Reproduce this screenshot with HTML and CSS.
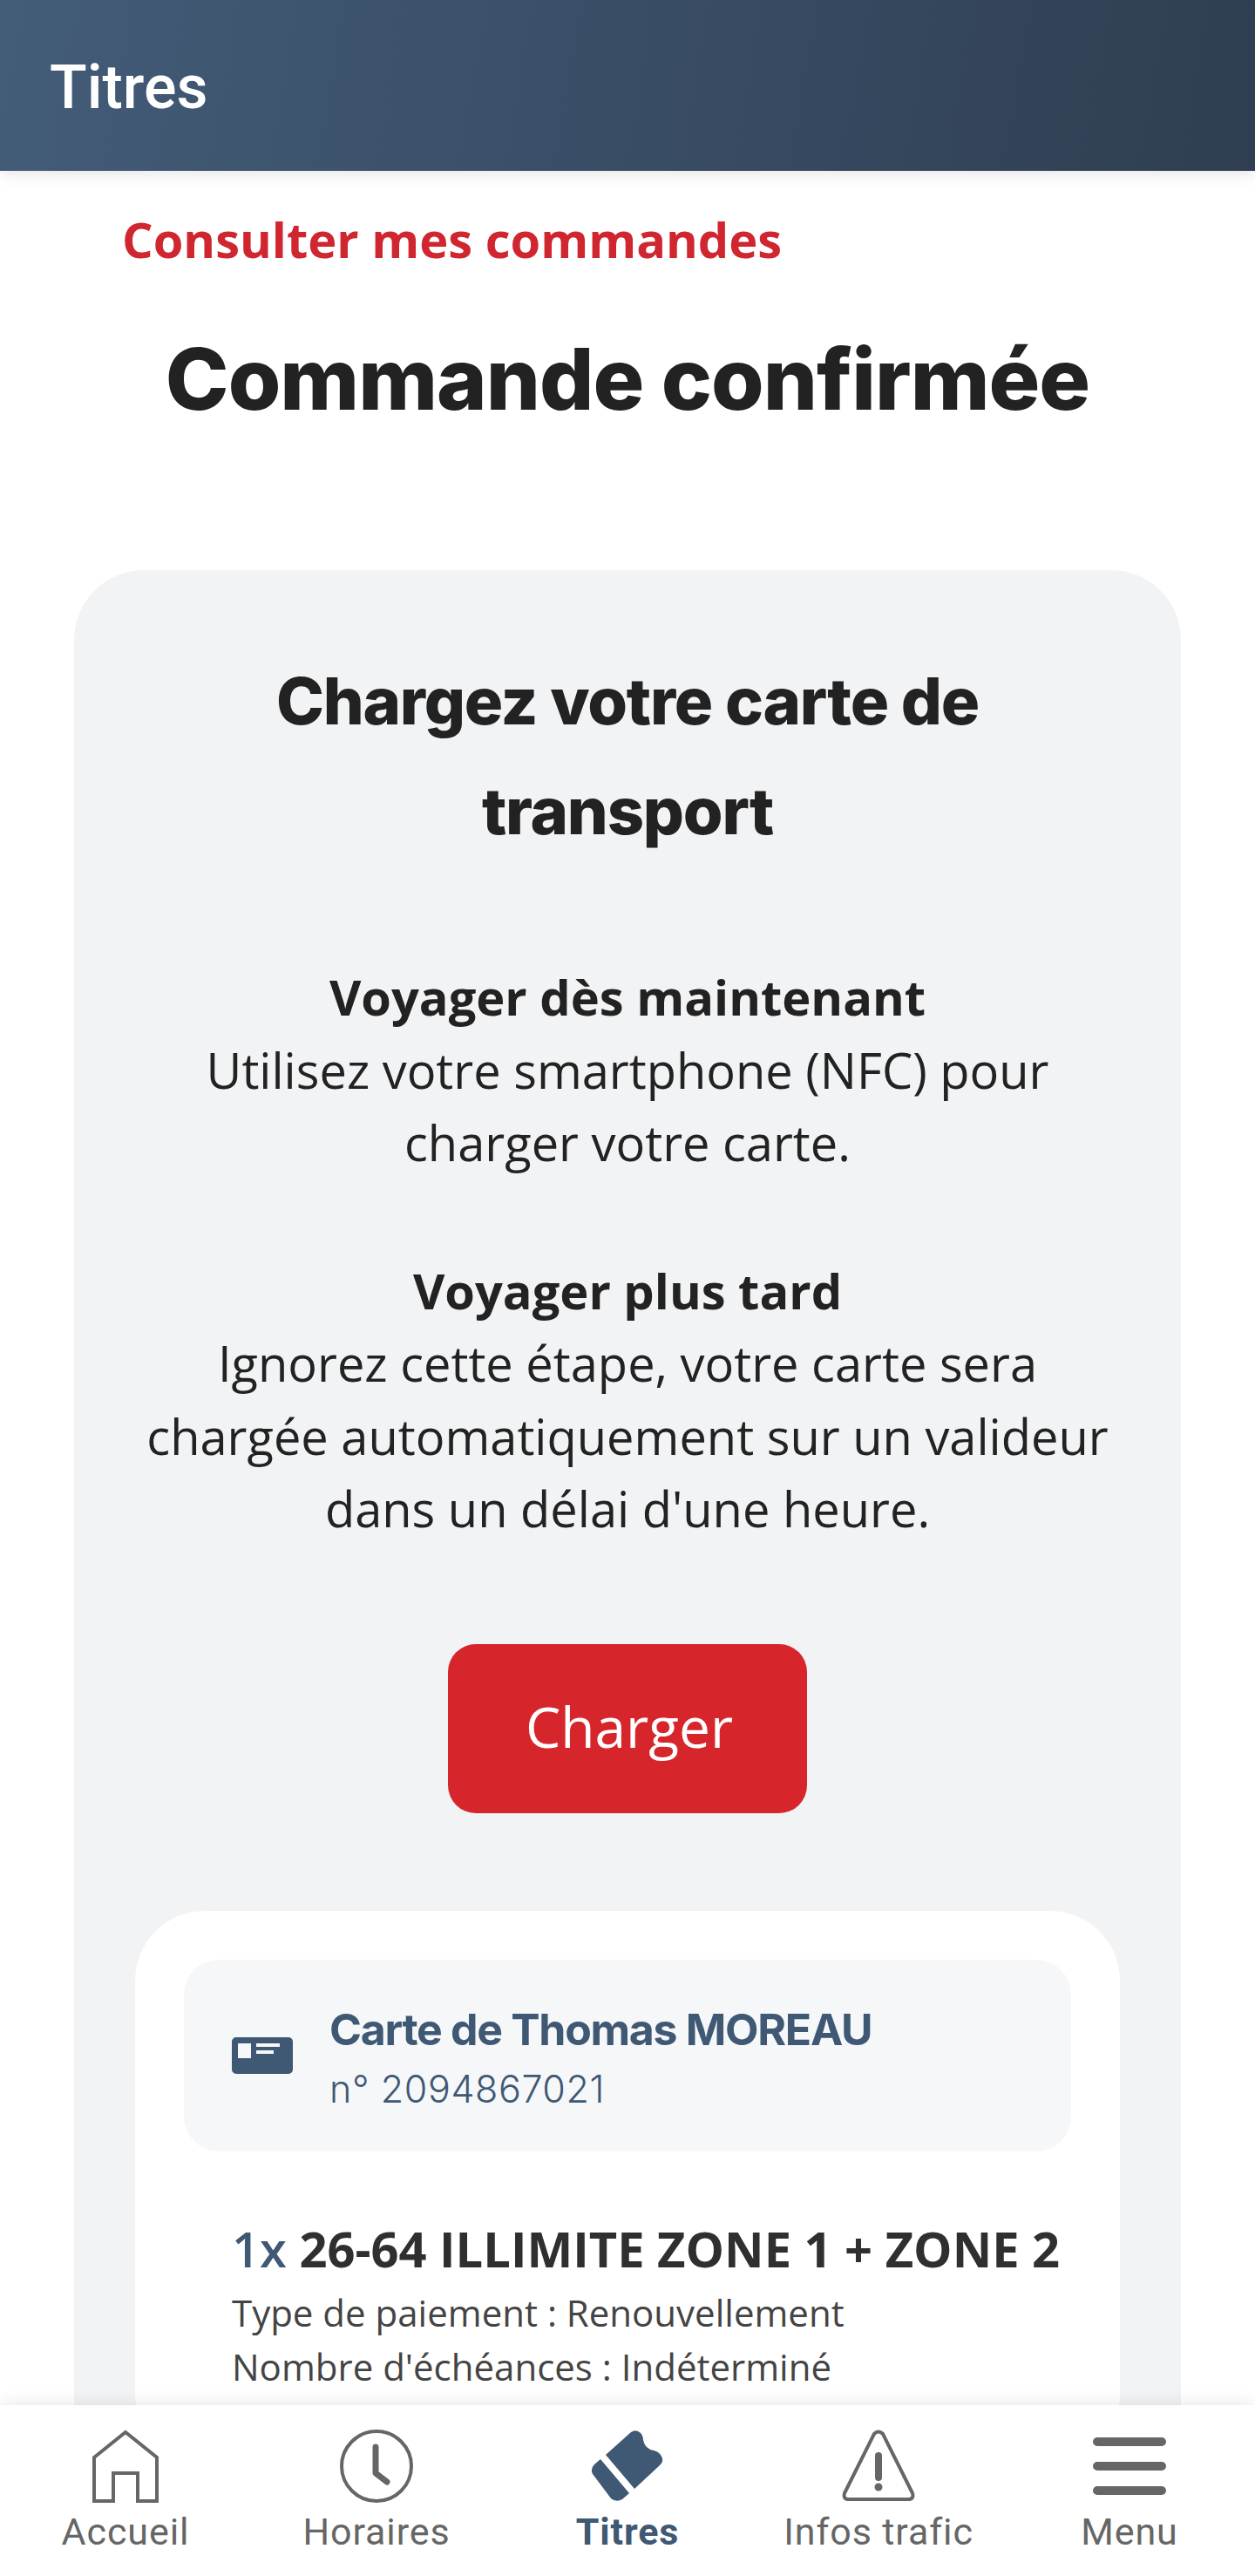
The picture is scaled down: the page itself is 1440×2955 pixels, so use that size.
FILE: index.html
```html
<!DOCTYPE html>
<html lang="fr">
<head>
    <meta charset="UTF-8">
    <meta name="viewport" content="width=device-width, initial-scale=1.0">
    <title>Titres</title>
    <link rel="stylesheet" href="styles.css">
</head>
<body>

    <header class="top-bar">
        <h1 class="top-title">Titres</h1>
    </header>

    <main class="content">
        <a class="orders-link" href="#">Consulter mes commandes</a>
        <h2 class="page-title">Commande confirmée</h2>

        <section class="panel">
            <h3 class="panel-title">Chargez votre carte de transport</h3>

            <p class="panel-text">
                <strong>Voyager dès maintenant</strong><br>
                Utilisez votre smartphone (NFC) pour charger votre carte.
            </p>
            <p class="panel-text">
                <strong>Voyager plus tard</strong><br>
                Ignorez cette étape, votre carte sera chargée automatiquement sur un valideur dans un délai d'une heure.
            </p>

            <button class="load-btn">Charger</button>

            <div class="order-card">
                <div class="card-owner">
                    <svg class="card-icon" viewBox="0 0 70 42">
                        <path fill-rule="evenodd" fill="#3f5873" d="M5 0h60a5 5 0 0 1 5 5v32a5 5 0 0 1-5 5H5a5 5 0 0 1-5-5V5a5 5 0 0 1 5-5zM7 7v17h15V7zM28 7v4h27V7zM28 15v4h20v-4z"/>
                    </svg>
                    <div class="owner-text">
                        <div class="owner-name">Carte de Thomas MOREAU</div>
                        <div class="owner-number">n° 2094867021</div>
                    </div>
                </div>

                <div class="order-line">
                    <div class="order-name"><span class="order-qty">1x</span> 26-64 ILLIMITE ZONE 1 + ZONE 2</div>
                    <div class="order-info">Type de paiement : Renouvellement</div>
                    <div class="order-info">Nombre d'échéances : Indéterminé</div>
                </div>
            </div>
        </section>
    </main>

    <nav class="bottom-nav">
        <a class="nav-item" href="#">
            <svg class="nav-icon" viewBox="0 0 76 84">
                <path fill="none" stroke="#666" stroke-width="4" d="M2 32 38 3l36 29v50H52V50H24v32H2z"/>
            </svg>
            <span>Accueil</span>
        </a>
        <a class="nav-item" href="#">
            <svg class="nav-icon" viewBox="0 0 84 84">
                <circle cx="42" cy="42" r="40" fill="none" stroke="#666" stroke-width="4"/>
                <path fill="none" stroke="#666" stroke-width="7" stroke-linecap="round" stroke-linejoin="round" d="M41 20v30l13 10"/>
            </svg>
            <span>Horaires</span>
        </a>
        <a class="nav-item active" href="#">
            <svg class="nav-icon" viewBox="0 0 84 84">
                <path fill="#3f5873" d="M17 29 46 3q6-4 11 1 3 3 3 8 2 10 12 12 5 1 8 5 5 7-1 12L50 68zM11 34l33 39-8 7q-7 4-13-1L2 51q-3-6 2-11z"/>
            </svg>
            <span>Titres</span>
        </a>
        <a class="nav-item" href="#">
            <svg class="nav-icon" viewBox="0 0 84 84">
                <path fill="none" stroke="#666" stroke-width="4" stroke-linejoin="round" d="M37 5q5-5 10 0l34 68q2 7-5 7H8q-7 0-5-7z"/>
                <path fill="none" stroke="#666" stroke-width="8" stroke-linecap="round" d="M42 30v25"/>
                <circle cx="42" cy="66" r="4.5" fill="#666"/>
            </svg>
            <span>Infos trafic</span>
        </a>
        <a class="nav-item" href="#">
            <svg class="nav-icon" viewBox="0 0 84 84">
                <path fill="none" stroke="#666" stroke-width="10" stroke-linecap="round" d="M5 14h74M5 42h74M5 70h74"/>
            </svg>
            <span>Menu</span>
        </a>
    </nav>

</body>
</html>
```
FILE: styles.css
```css
html, body {
    margin: 0;
    padding: 0;
    height: 100%;
    overflow: hidden;
}

body {
    display: flex;
    flex-direction: column;
    background-color: white;
    color: #222;
    font-family: 'Open Sans', sans-serif;
}

.top-bar {
    position: relative;
    flex: none;
    box-sizing: border-box;
    height: 196px;
    padding: 4px 0 0 57px;
    display: flex;
    align-items: center;
    background: linear-gradient(100deg, #435c78, #2f3e52);
    box-shadow: 0 4px 16px rgba(0, 0, 0, 0.1);
}

.top-title {
    margin: 0;
    color: white;
    font-family: 'Roboto', sans-serif;
    font-size: 70px;
    font-weight: 500;
}

.content {
    flex: 1;
    min-height: 0;
    overflow: hidden;
    padding: 48px 85px 0;
}

.orders-link {
    display: block;
    margin-left: 55px;
    color: #cf2630;
    font-size: 56px;
    font-weight: 700;
    line-height: 60px;
    text-decoration: none;
}

.page-title {
    margin: 76px 0 0;
    text-align: center;
    font-family: 'Inter', sans-serif;
    font-size: 98px;
    font-weight: 800;
    letter-spacing: -1px;
    line-height: 110px;
}

.panel {
    margin-top: 164px;
    padding: 87px 70px 80px;
    background-color: #f2f3f5;
    border-radius: 80px;
    text-align: center;
}

.panel-title {
    margin: 0 40px 109px;
    font-family: 'Inter', sans-serif;
    font-size: 74px;
    font-weight: 800;
    letter-spacing: -1.2px;
    line-height: 126px;
}

.panel-text {
    margin: 0 0 86px;
    font-size: 56px;
    line-height: 83.5px;
}

.load-btn {
    display: block;
    width: 412px;
    height: 194px;
    margin: 113px auto 112px;
    padding: 0 0 4px 4px;
    border: none;
    border-radius: 32px;
    background-color: #d6262c;
    color: white;
    font-family: 'Open Sans', sans-serif;
    font-size: 64px;
}

.order-card {
    padding: 56px 56px 80px;
    background-color: white;
    border-radius: 80px;
    text-align: left;
}

.card-owner {
    display: flex;
    align-items: center;
    gap: 42px;
    height: 220px;
    padding-left: 55px;
    background-color: #f5f7f9;
    border-radius: 40px;
    color: #3f5873;
    font-family: 'Inter', sans-serif;
}

.card-icon {
    width: 70px;
    height: 42px;
}

.owner-text {
    padding-top: 8px;
}

.owner-name {
    font-size: 50px;
    font-weight: 700;
    letter-spacing: -1.3px;
    line-height: 68px;
}

.owner-number {
    font-size: 43px;
    font-weight: 300;
    letter-spacing: 0.6px;
    line-height: 68px;
}

.order-line {
    padding: 69px 0 0 55px;
}

.order-name {
    font-size: 56px;
    font-weight: 700;
    line-height: 85px;
    color: #2f2f2f;
    white-space: nowrap;
}

.order-qty {
    color: #3f5873;
    font-weight: 600;
}

.order-info {
    font-size: 42px;
    line-height: 62px;
    color: #444;
}

.bottom-nav {
    position: relative;
    flex: none;
    height: 196px;
    display: grid;
    grid-template-columns: repeat(5, 1fr);
    background-color: white;
    box-shadow: 0 -4px 16px rgba(0, 0, 0, 0.08);
}

.nav-item {
    display: flex;
    flex-direction: column;
    align-items: center;
    padding-top: 28px;
    color: #666;
    font-family: 'Roboto', sans-serif;
    font-size: 43px;
    letter-spacing: 0.9px;
    text-decoration: none;
}

.nav-item.active {
    color: #3f5873;
    font-weight: 700;
}

.nav-icon {
    height: 84px;
    margin-bottom: 8px;
}
```
